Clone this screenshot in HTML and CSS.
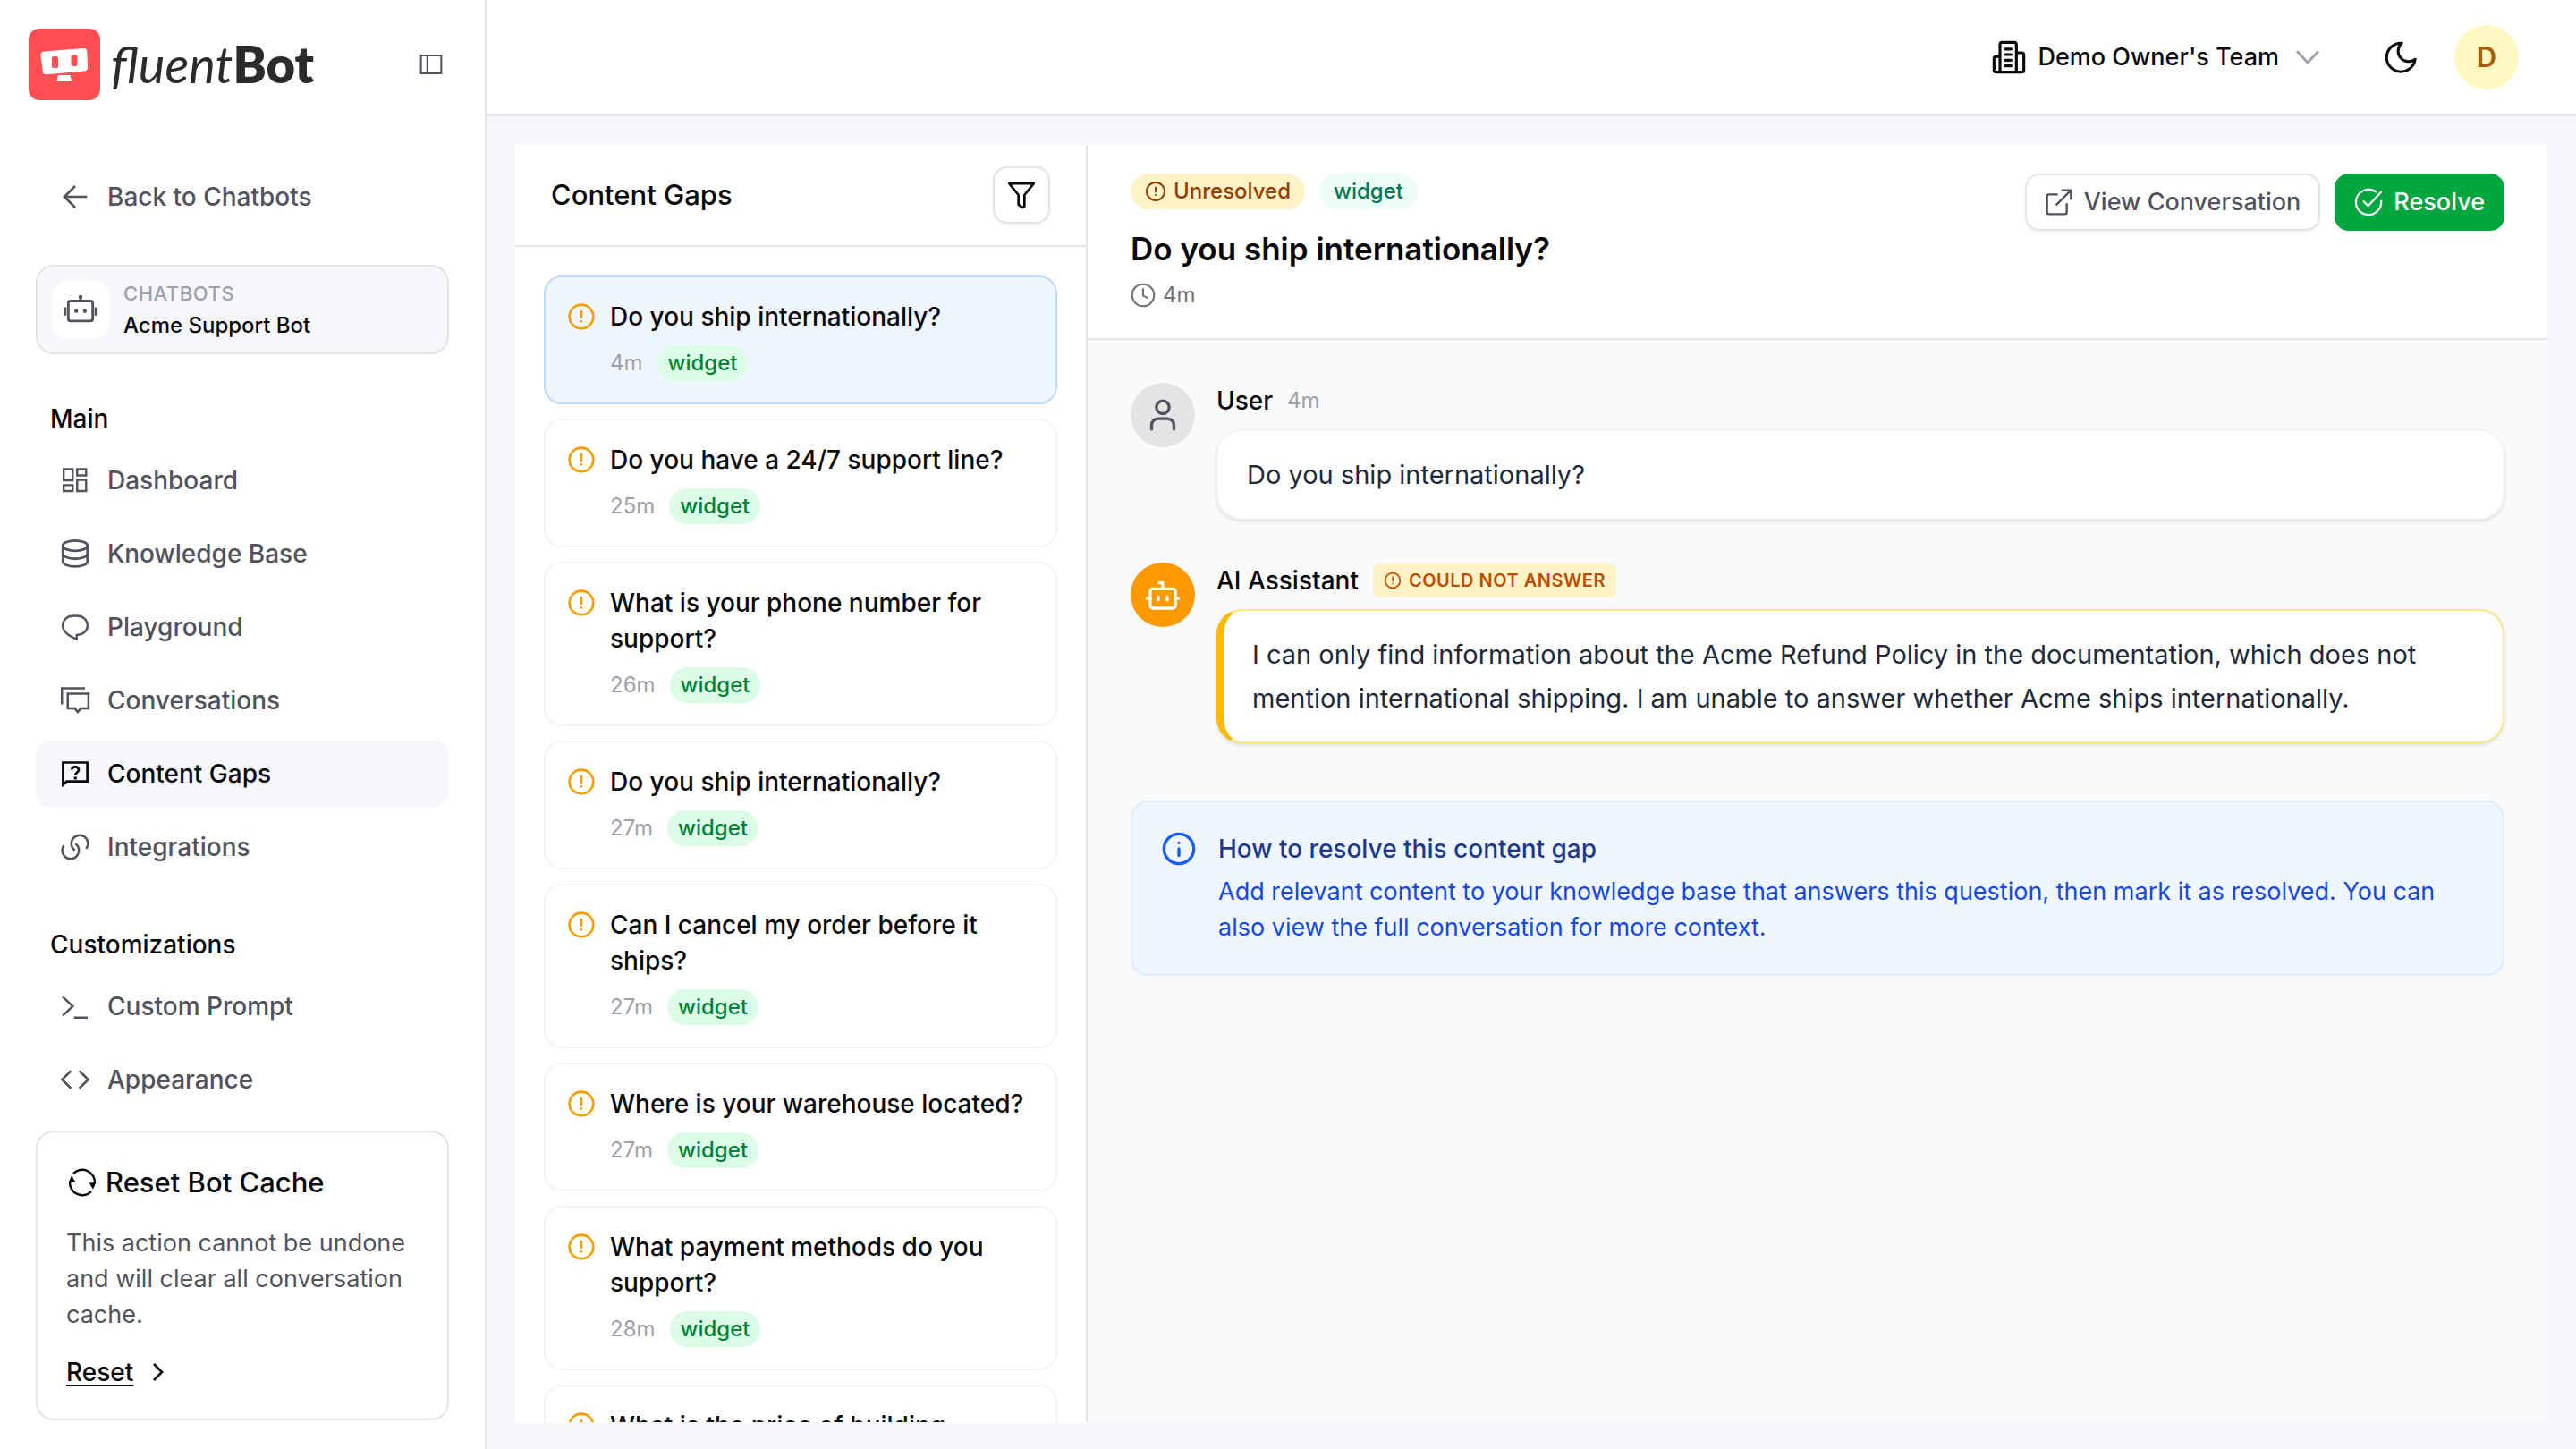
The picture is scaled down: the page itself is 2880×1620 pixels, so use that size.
FILE: index.html
```html
<!DOCTYPE html>
<html lang="en">
<head>
  <meta charset="UTF-8">
  <meta name="viewport" content="width=device-width, initial-scale=1">
  <title>Content Gaps - fluentBot</title>
  <link rel="stylesheet" href="styles.css">
</head>
<body>
  <svg class="sprite" aria-hidden="true">
    <symbol id="i-alert" viewBox="0 0 24 24">
      <circle cx="12" cy="12" r="10"/>
      <path d="M12 7.500v5M12 16h.01" stroke-linecap="round"/>
    </symbol>
    <symbol id="i-chevron" viewBox="0 0 24 24">
      <path d="M3.500 7.500 12 16.500l8.500-9"/>
    </symbol>
  </svg>

  <div class="app">
    <aside class="sidebar">
      <div class="brand-row">
        <a href="#" class="brand">
          <svg class="brand-mark" viewBox="0 0 80 80" aria-hidden="true">
            <rect width="80" height="80" rx="12" fill="#ff4f52"/>
            <path d="M17 25.500 61 22q4-.3 4.300 3.500L66 43q.2 4-3.500 4.400L20 51.300q-3.700.3-4.200-3.300L13.500 30q-.2-4 3.500-4.500z" fill="#fff"/>
            <path d="M33 52h13.500l1.500 7H31.500z" fill="#fff"/>
            <rect x="26" y="31" width="7" height="13" rx="2" fill="#ff4f52"/>
            <rect x="47.500" y="29" width="7" height="13" rx="2" fill="#ff4f52"/>
          </svg>
          <span class="brand-name"><i>fluent</i><b>Bot</b></span>
        </a>
        <button class="icon-btn" aria-label="Toggle sidebar">
          <svg class="icon" viewBox="0 0 24 24" stroke-width="1.500"><path d="M3.500 4.500h17v15h-17zM8.800 4.500v15"/></svg>
        </button>
      </div>

      <a href="#" class="nav-item back-link">
        <svg class="icon" viewBox="0 0 24 24" stroke-width="2"><path d="M22 12H3.500M12 3l-9 9 9 9"/></svg>
        Back to Chatbots
      </a>

      <div class="bot-card">
        <span class="bot-tile">
          <svg class="icon icon-lg" viewBox="0 0 24 24" stroke-width="1.700">
            <rect x="3.800" y="6.300" width="16.400" height="13.400" rx="1.500"/>
            <path d="M12 6.500V3.500M1.700 10.500V16M22.300 10.500V16"/>
            <g fill="currentColor" stroke="none"><circle cx="12" cy="3.500" r="1.300"/><circle cx="9.100" cy="13" r="1.300"/><circle cx="14.900" cy="13" r="1.300"/></g>
          </svg>
        </span>
        <span class="bot-text">
          <span class="bot-label">CHATBOTS</span>
          <span class="bot-name">Acme Support Bot</span>
        </span>
      </div>

      <h2 class="nav-title">Main</h2>
      <nav class="nav">
        <a href="#" class="nav-item">
          <svg class="icon" viewBox="0 0 24 24" stroke-width="1.800"><path d="M2.400 2.600h7.500v9.400H2.400zM13.700 2.600h7.500v5.300h-7.500zM13.700 11.600h7.500V21h-7.500zM2.400 16h7.500v5H2.400z"/></svg>
          Dashboard
        </a>
        <a href="#" class="nav-item">
          <svg class="icon" viewBox="0 0 24 24" stroke-width="2.100"><ellipse cx="12" cy="5.300" rx="10.300" ry="4.300"/><path d="M1.700 5.500v13c0 2.400 4.600 4.300 10.300 4.300s10.300-1.900 10.300-4.300v-13M1.700 12c0 2.400 4.600 4.300 10.300 4.300s10.300-1.900 10.300-4.300"/></svg>
          Knowledge Base
        </a>
        <a href="#" class="nav-item">
          <svg class="icon" viewBox="0 0 24 24" stroke-width="1.800"><path d="M13.300 18.700v3.400C8.500 20.300 1.600 16.800 1.600 10.700c0-4.600 3.700-8.100 9-8.100h2.800c5.200 0 9 3.500 9 8.100s-3.900 8-9.100 8z"/></svg>
          Playground
        </a>
        <a href="#" class="nav-item">
          <svg class="icon" viewBox="0 0 24 24" stroke-width="1.900"><path d="M.9 15.300V1.800h19.300M5.800 6.300h17.400v12.500h-6.500l-2.500 3-2.500-3H5.800z"/></svg>
          Conversations
        </a>
        <a href="#" class="nav-item active">
          <svg class="icon" viewBox="0 0 24 24" stroke-width="2"><path d="M1.800 21.300V2.600h20.400v15.900H4.800zM9.200 8.600c.2-3.300 5.800-3.100 5.800.2 0 2.100-2.800 2.100-2.800 4.600"/><path d="M11 14.600h2.400v2.200H11z" fill="currentColor" stroke="none"/></svg>
          Content Gaps
        </a>
        <a href="#" class="nav-item">
          <svg class="icon" viewBox="0 0 24 24" stroke-width="1.900"><path d="M21.300 13.500A7 7 0 1 0 11.700 14.800M2.700 10.500A7 7 0 1 0 12.300 9.200"/></svg>
          Integrations
        </a>
      </nav>

      <h2 class="nav-title">Customizations</h2>
      <nav class="nav">
        <a href="#" class="nav-item">
          <svg class="icon" viewBox="0 0 24 24" stroke-width="1.900"><path d="m1.500 4 8.500 8-8.500 8M11 21.500h11.500"/></svg>
          Custom Prompt
        </a>
        <a href="#" class="nav-item">
          <svg class="icon" viewBox="0 0 24 24" stroke-width="1.900"><path d="M8.500 4.700 1 12l7.500 7.300M15.500 4.700 23 12l-7.500 7.300"/></svg>
          Appearance
        </a>
      </nav>

      <section class="reset-card">
        <h3 class="reset-title">
          <svg class="icon icon-reset" viewBox="0 0 24 24" stroke-width="1.600">
            <path d="M5.400 5.300A9.300 9.300 0 0 1 21.300 12.500M18.600 18.700A9.300 9.300 0 0 1 2.700 11.500"/>
            <path d="m4 6.900 2.900 4.700-5.100.4zM20 17.100l-2.900-4.700 5.100-.4z" fill="currentColor" stroke="none"/>
          </svg>
          Reset Bot Cache
        </h3>
        <p>This action cannot be undone and will clear all conversation cache.</p>
        <button class="reset-btn">
          <span>Reset</span>
          <svg class="icon icon-sm" viewBox="0 0 24 24" stroke-width="2.800"><path d="m7 3 9 9-9 9"/></svg>
        </button>
      </section>
    </aside>

    <div class="page">
      <header class="topbar">
        <button class="team-btn">
          <svg class="icon icon-lg" viewBox="0 0 24 24" stroke-width="1.900" stroke-linejoin="round" stroke-linecap="round">
            <path d="M6 22V3.500A1.500 1.500 0 0 1 7.500 2h8A1.500 1.500 0 0 1 17 3.500V22M6 11.500H3.500A1.500 1.500 0 0 0 2 13v7.500A1.500 1.500 0 0 0 3.500 22h17a1.500 1.500 0 0 0 1.500-1.500v-10A1.500 1.500 0 0 0 20.500 9H17M9.500 6.500h4M9.500 10.200h4M9.500 14h4M9.500 17.800h4"/>
          </svg>
          Demo Owner's Team
          <svg class="icon team-chevron" stroke-width="2" stroke-linecap="round"><use href="#i-chevron"/></svg>
        </button>
        <button class="icon-btn" aria-label="Dark mode">
          <svg class="icon icon-lg" viewBox="0 0 24 24" stroke-width="1.800" stroke-linejoin="round"><path d="M12.800 2.500A9.600 9.600 0 1 0 21.700 13.300a6.900 6.900 0 0 1-8.900-10.800z"/></svg>
        </button>
        <button class="avatar" aria-label="Account">D</button>
      </header>

      <main class="content">
        <section class="gap-panel">
          <div class="gap-head">
            <h1>Content Gaps</h1>
            <button class="btn btn-square" aria-label="Filter">
              <svg class="icon" viewBox="0 0 24 24" stroke-width="2" stroke-linejoin="round"><path d="M1.700 2.300h20.600L14.500 12v9.500l-2 1-3-2.500v-8z"/></svg>
            </button>
          </div>
          <div class="gap-list">
            <button class="gap-card selected">
              <svg class="icon alert"><use href="#i-alert"/></svg>
              <span class="gap-body">
                <span class="gap-question">Do you ship internationally?</span>
                <span class="gap-meta">4m <span class="tag">widget</span></span>
              </span>
            </button>
            <button class="gap-card">
              <svg class="icon alert"><use href="#i-alert"/></svg>
              <span class="gap-body">
                <span class="gap-question">Do you have a 24/7 support line?</span>
                <span class="gap-meta">25m <span class="tag">widget</span></span>
              </span>
            </button>
            <button class="gap-card">
              <svg class="icon alert"><use href="#i-alert"/></svg>
              <span class="gap-body">
                <span class="gap-question">What is your phone number for support?</span>
                <span class="gap-meta">26m <span class="tag">widget</span></span>
              </span>
            </button>
            <button class="gap-card">
              <svg class="icon alert"><use href="#i-alert"/></svg>
              <span class="gap-body">
                <span class="gap-question">Do you ship internationally?</span>
                <span class="gap-meta">27m <span class="tag">widget</span></span>
              </span>
            </button>
            <button class="gap-card">
              <svg class="icon alert"><use href="#i-alert"/></svg>
              <span class="gap-body">
                <span class="gap-question">Can I cancel my order before it ships?</span>
                <span class="gap-meta">27m <span class="tag">widget</span></span>
              </span>
            </button>
            <button class="gap-card">
              <svg class="icon alert"><use href="#i-alert"/></svg>
              <span class="gap-body">
                <span class="gap-question">Where is your warehouse located?</span>
                <span class="gap-meta">27m <span class="tag">widget</span></span>
              </span>
            </button>
            <button class="gap-card">
              <svg class="icon alert"><use href="#i-alert"/></svg>
              <span class="gap-body">
                <span class="gap-question">What payment methods do you support?</span>
                <span class="gap-meta">28m <span class="tag">widget</span></span>
              </span>
            </button>
            <button class="gap-card">
              <svg class="icon alert"><use href="#i-alert"/></svg>
              <span class="gap-body">
                <span class="gap-question">What is the price of building</span>
              </span>
            </button>
          </div>
        </section>

        <section class="detail">
          <header class="detail-head">
            <div>
              <div class="badges">
                <span class="badge badge-amber"><svg class="icon icon-sm" stroke-width="2"><use href="#i-alert"/></svg>Unresolved</span>
                <span class="badge badge-green">widget</span>
              </div>
              <h2>Do you ship internationally?</h2>
              <div class="detail-time">
                <svg class="icon icon-md" viewBox="0 0 24 24" stroke-width="1.800" stroke-linecap="round" stroke-linejoin="round"><circle cx="12" cy="12" r="10.500"/><path d="M12 6v6.500l4 2"/></svg>
                4m
              </div>
            </div>
            <div class="actions">
              <button class="btn">
                <svg class="icon" viewBox="0 0 24 24" stroke-width="1.800" stroke-linejoin="round"><path d="M11 5.500H3.500A1.500 1.500 0 0 0 2 7v13.500A1.500 1.500 0 0 0 3.500 22H17a1.500 1.500 0 0 0 1.500-1.500V13M14 2h8v8M22 2 9.500 14.500"/></svg>
                View Conversation
              </button>
              <button class="btn btn-resolve">
                <svg class="icon" viewBox="0 0 24 24" stroke-width="1.700" stroke-linecap="round" stroke-linejoin="round"><path d="M18 3.200A10.600 10.600 0 1 0 22.600 11M8 11.500l3.700 3.700L22.500 3.500"/></svg>
                Resolve
              </button>
            </div>
          </header>

          <div class="thread">
            <article class="message">
              <span class="msg-avatar">
                <svg class="icon icon-lg" viewBox="0 0 24 24" stroke-width="2" stroke-linecap="round"><circle cx="12" cy="6.800" r="4.300"/><path d="M4.500 21.500v-2.700A4.300 4.300 0 0 1 8.800 14.500h6.400a4.300 4.300 0 0 1 4.300 4.300V21.500"/></svg>
              </span>
              <div class="msg-main">
                <div class="msg-head"><strong>User</strong><span class="msg-time">4m</span></div>
                <p class="bubble">Do you ship internationally?</p>
              </div>
            </article>

            <article class="message">
              <span class="msg-avatar bot">
                <svg class="icon icon-lg" viewBox="0 0 24 24" stroke-width="2" stroke-linecap="round" stroke-linejoin="round"><path d="M12 8V4H9.500"/><rect x="3.500" y="8" width="17" height="13" rx="2"/><path d="M1.500 14.500h2M20.500 14.500h2M15 13.500v2M9 13.500v2"/></svg>
              </span>
              <div class="msg-main">
                <div class="msg-head">
                  <strong>AI Assistant</strong>
                  <span class="fail-tag"><svg class="icon icon-xs" stroke-width="2"><use href="#i-alert"/></svg>COULD NOT ANSWER</span>
                </div>
                <p class="bubble unanswered">I can only find information about the Acme Refund Policy in the documentation, which does not mention international shipping. I am unable to answer whether Acme ships internationally.</p>
              </div>
            </article>

            <aside class="tip">
              <svg class="icon icon-lg" viewBox="0 0 24 24" stroke-width="2" stroke-linecap="round"><circle cx="12" cy="12" r="10"/><path d="M12 16.500v-4.500M12 8h.01"/></svg>
              <div>
                <h3>How to resolve this content gap</h3>
                <p>Add relevant content to your knowledge base that answers this question, then mark it as resolved. You can also view the full conversation for more context.</p>
              </div>
            </aside>
          </div>
        </section>
      </main>
    </div>
  </div>
</body>
</html>
```
FILE: styles.css
```css
* {
  box-sizing: border-box;
  margin: 0;
}
body {
  font-family: Inter, "Liberation Sans", sans-serif;
  font-size: 28px;
  line-height: 40px;
  color: #09090b;
  background: #fff;
}
h1, h2, h3, strong {
  font-weight: 500;
}
a {
  color: inherit;
  text-decoration: none;
}
button {
  padding: 0;
  border: 0;
  background: none;
  color: inherit;
  font: inherit;
  cursor: pointer;
}
.sprite {
  display: none;
}
.icon {
  width: 32px;
  height: 32px;
  flex: none;
  fill: none;
  stroke: currentColor;
  overflow: visible;
}
.icon-lg {
  width: 40px;
  height: 40px;
}
.icon-reset {
  width: 36px;
  height: 36px;
}
.icon-md {
  width: 28px;
  height: 28px;
}
.icon-sm {
  width: 24px;
  height: 24px;
}
.icon-xs {
  width: 20px;
  height: 20px;
}
.icon-btn {
  display: flex;
}
.app {
  display: flex;
  height: 100vh;
  overflow: hidden;
}

/* sidebar */
.sidebar {
  width: 544px;
  flex: none;
  padding: 32px 40px;
  border-right: 2px solid #e4e4e7;
  overflow: hidden;
}
.brand-row {
  display: flex;
  align-items: center;
  justify-content: space-between;
  margin: 0 4px 0 -8px;
}
.brand {
  display: flex;
  align-items: center;
  gap: 12px;
}
.brand-mark {
  width: 80px;
  height: 80px;
}
.brand-name {
  font-family: Lato, sans-serif;
  font-size: 56px;
  line-height: 80px;
  color: #2b2b2b;
}
.brand-name i {
  font-weight: 400;
}
.brand-name b {
  font-weight: 800;
}
.brand-row .icon-btn {
  color: #52525c;
}
.nav {
  display: flex;
  flex-direction: column;
  gap: 8px;
}
.nav-item {
  display: flex;
  align-items: center;
  gap: 20px;
  height: 74px;
  padding: 0 28px;
  border-radius: 16px;
  font-weight: 500;
  color: #52525c;
}
.nav-item.active {
  background: #f5f7fb;
  color: #09090b;
}
.back-link {
  margin: 71px 0 39px;
}
.bot-card {
  display: flex;
  align-items: center;
  gap: 16px;
  padding: 12px 16px;
  border: 2px solid #e4e4e7;
  border-radius: 20px;
  background: #f5f7fb;
}
.bot-tile {
  display: flex;
  align-items: center;
  justify-content: center;
  width: 64px;
  height: 64px;
  border-radius: 16px;
  background: #fff;
  color: #52525c;
}
.bot-text {
  display: flex;
  flex-direction: column;
  font-size: 24px;
  line-height: 36px;
  font-weight: 500;
}
.bot-label {
  font-size: 22px;
  letter-spacing: 0.025em;
  color: #9f9fa9;
}
.nav-title {
  margin: 52px 0 12px;
  padding-left: 16px;
  font-size: 28px;
}
.reset-card {
  margin-top: 20px;
  padding: 32px;
  border: 2px solid #e4e4e7;
  border-radius: 20px;
}
.reset-title {
  display: flex;
  align-items: center;
  gap: 8px;
  font-size: 31px;
  line-height: 48px;
}
.reset-card p {
  margin: 24px 0;
  font-size: 27px;
  color: #52525c;
}
.reset-btn {
  display: flex;
  align-items: center;
  gap: 16px;
  font-weight: 500;
}
.reset-btn span {
  text-decoration: underline;
  text-underline-offset: 4px;
}

/* top bar */
.page {
  flex: 1;
  min-width: 0;
  display: flex;
  flex-direction: column;
  background: #f5f7fa;
}
.topbar {
  display: flex;
  align-items: center;
  justify-content: flex-end;
  gap: 40px;
  height: 130px;
  flex: none;
  padding: 0 64px;
  border-bottom: 2px solid #e4e4e7;
  background: #fff;
}
.team-btn {
  display: flex;
  align-items: center;
  gap: 12px;
  margin-right: 28px;
  font-size: 27px;
  font-weight: 500;
}
.team-chevron {
  margin-left: 4px;
  color: #9f9fa9;
}
.avatar {
  width: 72px;
  height: 72px;
  border-radius: 50%;
  background: #fef9c2;
  color: #a65f00;
  font-size: 31px;
  font-weight: 600;
}

/* content gaps list */
.content {
  flex: 1;
  min-height: 0;
  display: flex;
  padding: 32px 32px 30px;
}
.gap-panel {
  width: 640px;
  flex: none;
  display: flex;
  flex-direction: column;
  border-right: 2px solid #e4e4e7;
  background: #fff;
}
.gap-head {
  display: flex;
  align-items: center;
  justify-content: space-between;
  padding: 24px 40px;
  border-bottom: 2px solid #e4e4e7;
}
.gap-head h1 {
  font-size: 31px;
}
.gap-list {
  flex: 1;
  min-height: 0;
  display: flex;
  flex-direction: column;
  gap: 16px;
  padding: 32px;
  overflow-y: auto;
  scrollbar-width: none;
}
.gap-card {
  display: flex;
  flex: none;
  gap: 16px;
  padding: 24px;
  border: 2px solid #f4f4f5;
  border-radius: 20px;
  background: #fff;
  text-align: left;
}
.gap-card.selected {
  border-color: #bedbff;
  background: #eff6ff;
}
.alert {
  margin-top: 4px;
  color: #f99c00;
  stroke-width: 2;
}
.gap-body {
  display: flex;
  flex-direction: column;
  gap: 12px;
}
.gap-question {
  font-weight: 500;
}
.gap-meta {
  display: flex;
  align-items: center;
  gap: 16px;
  font-size: 24px;
  color: #9f9fa9;
}
.tag {
  padding: 0 12px;
  border-radius: 20px;
  background: #dcfce7;
  color: #008236;
  font-weight: 500;
}

/* buttons */
.btn {
  display: flex;
  align-items: center;
  justify-content: center;
  gap: 12px;
  height: 64px;
  padding: 0 20px;
  border: 2px solid #e4e4e7;
  border-radius: 16px;
  background: #fff;
  box-shadow: 0 2px 4px rgba(0, 0, 0, 0.05);
  color: #52525c;
  font-size: 27px;
  font-weight: 500;
}
.btn-square {
  width: 64px;
  padding: 0;
  color: #09090b;
}
.btn-resolve {
  border-color: #00a63e;
  background: #00a63e;
  box-shadow: none;
  color: #fff;
}

/* detail */
.detail {
  flex: 1;
  min-width: 0;
  display: flex;
  flex-direction: column;
  background: #f9fafb;
}
.detail-head {
  display: flex;
  align-items: flex-start;
  justify-content: space-between;
  padding: 32px 48px;
  border-bottom: 2px solid #e4e4e7;
  background: #fff;
}
.badges {
  display: flex;
  gap: 16px;
}
.badge {
  display: flex;
  align-items: center;
  gap: 8px;
  padding: 0 16px;
  border-radius: 20px;
  font-size: 24px;
  font-weight: 500;
}
.badge-amber {
  background: #fef3c6;
  color: #973c00;
}
.badge-green {
  background: #ecfdf5;
  color: #007a55;
}
.detail-head h2 {
  margin: 20px 0 12px;
  font-size: 35px;
  line-height: 48px;
  font-weight: 600;
}
.detail-time {
  display: flex;
  align-items: center;
  gap: 8px;
  font-size: 24px;
  line-height: 32px;
  color: #71717b;
}
.actions {
  display: flex;
  gap: 16px;
}
.thread {
  display: flex;
  flex-direction: column;
  gap: 48px;
  padding: 48px;
}
.message {
  display: flex;
  gap: 24px;
}
.msg-avatar {
  display: flex;
  align-items: center;
  justify-content: center;
  width: 72px;
  height: 72px;
  flex: none;
  border-radius: 50%;
  background: #e4e4e7;
  color: #52525c;
}
.msg-avatar.bot {
  background: #fe9a00;
  color: #fff;
}
.msg-main {
  flex: 1;
  min-width: 0;
}
.msg-head {
  display: flex;
  align-items: center;
  gap: 16px;
  margin-bottom: 12px;
}
.msg-time {
  font-size: 24px;
  color: #9f9fa9;
}
.fail-tag {
  display: flex;
  align-items: center;
  gap: 8px;
  padding: 0 12px;
  border-radius: 8px;
  background: #fef3c6;
  color: #bb4d00;
  font-size: 20px;
  line-height: 38px;
  font-weight: 600;
  letter-spacing: 0.025em;
}
.bubble {
  padding: 24px 32px;
  border: 2px solid #f4f4f5;
  border-radius: 28px;
  background: #fff;
  box-shadow: 0 2px 4px rgba(0, 0, 0, 0.12);
  font-size: 29px;
  line-height: 49px;
  color: #1e2939;
}
.bubble.unanswered {
  border-color: #fee685;
  border-left: 8px solid #ffb900;
}
.tip {
  display: flex;
  gap: 24px;
  margin-top: 16px;
  padding: 32px;
  border: 2px solid #dbeafe;
  border-radius: 20px;
  background: #eff6ff;
  color: #155dfc;
}
.tip h3 {
  margin-bottom: 8px;
  font-size: 28px;
  color: #1c398e;
}
.tip p {
  font-size: 27px;
  color: #1447e6;
}
```
